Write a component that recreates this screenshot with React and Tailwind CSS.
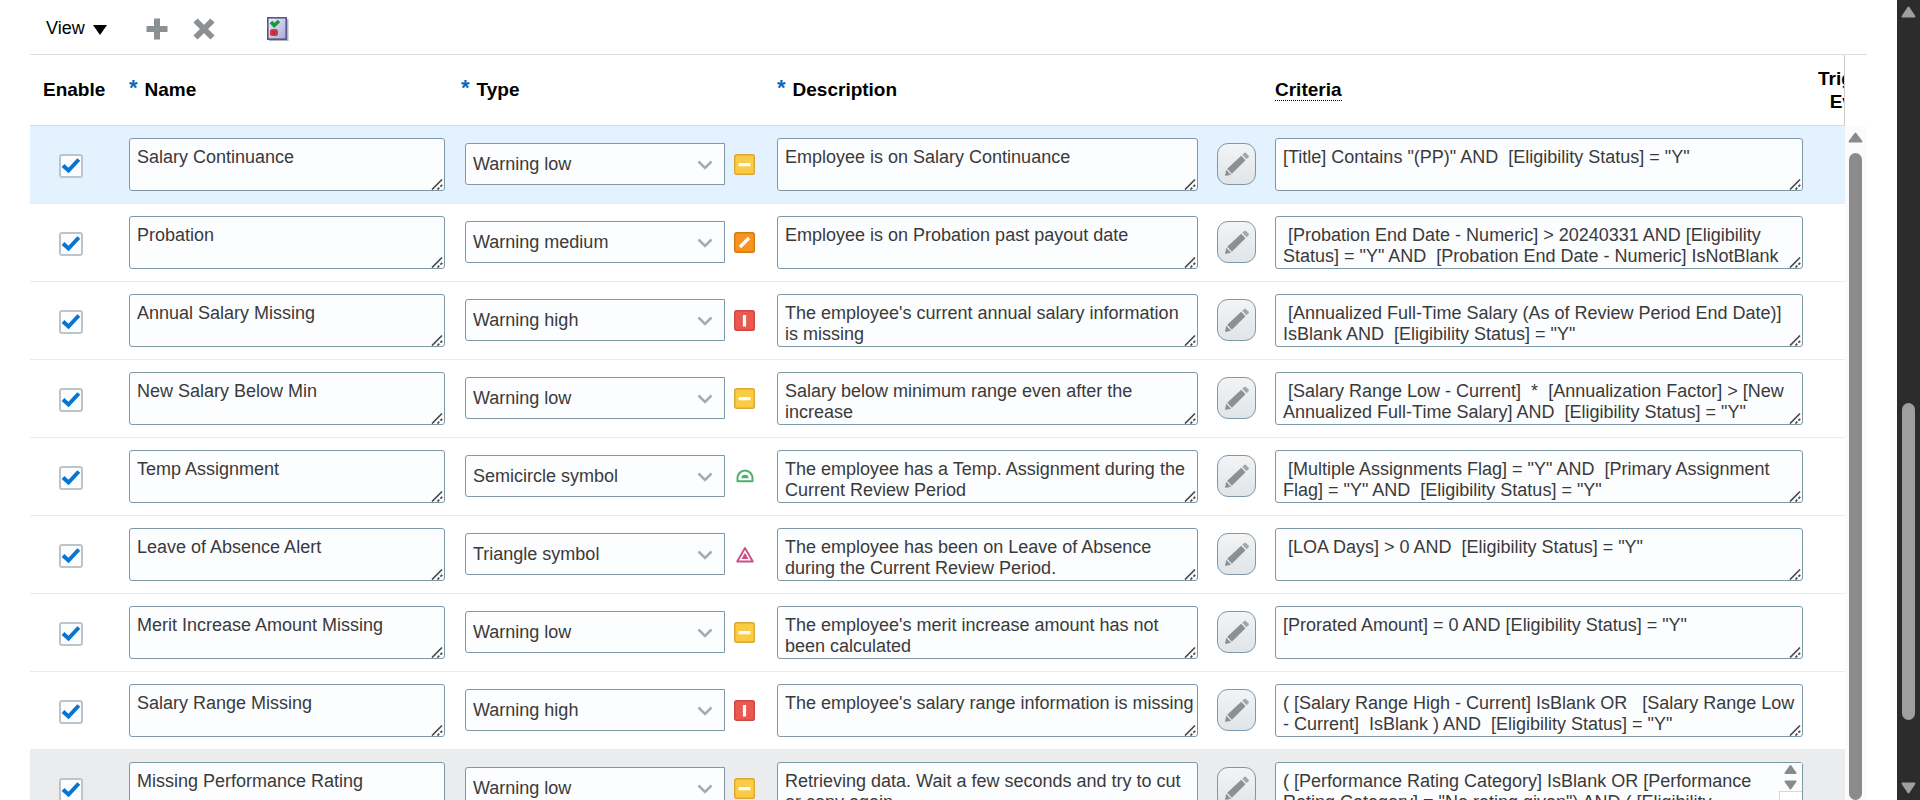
import React from 'react';

const rows = [
  { name: 'Salary Continuance', type: 'Warning low', desc: 'Employee is on Salary Continuance', criteria: '[Title] Contains "(PP)" AND  [Eligibility Status] = "Y"', state: 'selected' },
  { name: 'Probation', type: 'Warning medium', desc: 'Employee is on Probation past payout date', criteria: ' [Probation End Date - Numeric] > 20240331 AND [Eligibility Status] = "Y" AND  [Probation End Date - Numeric] IsNotBlank' },
  { name: 'Annual Salary Missing', type: 'Warning high', desc: "The employee's current annual salary information is missing", criteria: ' [Annualized Full-Time Salary (As of Review Period End Date)] IsBlank AND  [Eligibility Status] = "Y"' },
  { name: 'New Salary Below Min', type: 'Warning low', desc: 'Salary below minimum range even after the increase', criteria: ' [Salary Range Low - Current]  *  [Annualization Factor] > [New Annualized Full-Time Salary] AND  [Eligibility Status] = "Y"' },
  { name: 'Temp Assignment', type: 'Semicircle symbol', desc: 'The employee has a Temp. Assignment during the Current Review Period', criteria: ' [Multiple Assignments Flag] = "Y" AND  [Primary Assignment Flag] = "Y" AND  [Eligibility Status] = "Y"' },
  { name: 'Leave of Absence Alert', type: 'Triangle symbol', desc: 'The employee has been on Leave of Absence during the Current Review Period.', criteria: ' [LOA Days] > 0 AND  [Eligibility Status] = "Y"' },
  { name: 'Merit Increase Amount Missing', type: 'Warning low', desc: "The employee's merit increase amount has not been calculated", criteria: '[Prorated Amount] = 0 AND [Eligibility Status] = "Y"' },
  { name: 'Salary Range Missing', type: 'Warning high', desc: "The employee's salary range information is missing", criteria: '( [Salary Range High - Current] IsBlank OR   [Salary Range Low - Current]  IsBlank ) AND  [Eligibility Status] = "Y"' },
  { name: 'Missing Performance Rating', type: 'Warning low', desc: 'Retrieving data. Wait a few seconds and try to cut or copy again.', criteria: '( [Performance Rating Category] IsBlank OR [Performance Rating Category] = "No rating given") AND ( [Eligibility Status] = "Y")', state: 'hover', scroll: true },
];

const types = ['Warning low', 'Warning medium', 'Warning high', 'Semicircle symbol', 'Triangle symbol'];

function TypeIcon({ type }) {
  if (type === 'Semicircle symbol') {
    return (
      <svg viewBox="0 0 21 21" className="size-[21px] shrink-0" aria-hidden="true">
        <path d="M3.500 15.200v-3a7.500 7.800 0 0 1 15 0v3z" fill="#fff" stroke="#4fae6b" strokeWidth="2" strokeLinejoin="round" />
        <path d="M7.400 12.300a3.600 3.600 0 0 1 7.200 0z" fill="#4fae6b" />
      </svg>
    );
  }
  if (type === 'Triangle symbol') {
    return (
      <svg viewBox="0 0 21 21" className="size-[21px] shrink-0" aria-hidden="true">
        <path d="M11 4L18.800 17.500H3.200z" fill="#fff" stroke="#cc4f87" strokeWidth="1.900" strokeLinejoin="round" />
        <path d="M11 8.800l3.500 6.200H7.500z" fill="#cc4f87" />
      </svg>
    );
  }
  const look = {
    'Warning low': { fill: '#fbcb43', edge: '#d9a935', mark: <path d="M4.500 10.700h12" /> },
    'Warning medium': { fill: '#f8931d', edge: '#d27b14', mark: <path d="M6 15l9-9" /> },
    'Warning high': { fill: '#ec5850', edge: '#c94a44', mark: <path d="M10.500 5v11.500" /> },
  }[type];
  return (
    <svg viewBox="0 0 21 21" className="size-[21px] shrink-0" aria-hidden="true">
      <rect x="0.7" y="0.7" width="19.6" height="19.6" rx="1.8" fill={look.fill} stroke={look.edge} strokeWidth="1.4" />
      <g stroke="#fff" strokeWidth="3.2" strokeLinecap="butt">{look.mark}</g>
    </svg>
  );
}

function Grip() {
  return (
    <svg viewBox="0 0 12 12" className="pointer-events-none absolute right-[2px] bottom-[1px] size-3" aria-hidden="true">
      <path d="M1 11.500L11 1.500M6.500 11.500l1.800-1.800M9.400 8.600l1.800-1.800" stroke="#4a4a4a" strokeWidth="1.700" />
    </svg>
  );
}

function InnerScroll() {
  return (
    <div className="pointer-events-none absolute top-px right-px bottom-px flex w-[23px] flex-col bg-[#fbfcfe]" aria-hidden="true">
      <svg viewBox="0 0 23 28" className="h-7 w-full">
        <path d="M11.5 3L16.500 10H6.500z M11.500 25.500L6.500 18.500H16.500z" fill="#8a8a8a" stroke="#8a8a8a" strokeWidth="2" strokeLinejoin="round" />
      </svg>
      <div className="flex-1 border-t border-l border-[#d5d8da] bg-white" />
    </div>
  );
}

function Area({ label, value, scroll }) {
  return (
    <div className="relative flex">
      <textarea
        aria-label={label}
        defaultValue={value}
        className={'block h-[53px] w-full resize-none overflow-hidden rounded-[3px] border border-[#7f98a6] bg-[#fcfdff] pt-2 pl-[7px] text-[18px] leading-[21px] text-[#3a3a3a] outline-none ' + (scroll ? 'pr-9' : 'pr-px')}
      />
      {scroll ? <InnerScroll /> : <Grip />}
    </div>
  );
}

function Row({ row }) {
  const tone = row.state === 'selected' ? 'bg-[#e4f1ff]' : row.state === 'hover' ? 'bg-[#ebeced]' : 'bg-white';
  return (
    <tr className={'h-[78px] border-b border-[#e9ebed] ' + tone}>
      <td className="p-0">
        <label className="relative mt-1 ml-[29px] block size-6">
          <input type="checkbox" defaultChecked aria-label={'Enable ' + row.name} className="peer block size-6 appearance-none rounded-[3px] border-2 border-[#bcc5cb] bg-[#fcfdff]" />
          <svg viewBox="0 0 24 24" className="pointer-events-none absolute inset-0 hidden size-6 peer-checked:block" aria-hidden="true">
            <path d="M4 11.500l5.500 5L19.800 5.500" fill="none" stroke="#0a74d1" strokeWidth="4" />
          </svg>
        </label>
      </td>
      <td className="py-0 pr-2 pl-2"><Area label="Name" value={row.name} /></td>
      <td className="py-0 pr-2 pl-3">
        <div className="flex items-center gap-[9px]">
          <div className="relative w-[260px]">
            <select aria-label="Type" defaultValue={row.type} className="block h-[42px] w-full appearance-none rounded-l-[3px] border border-[#7f98a6] bg-[#fcfdff] pr-9 pl-[7px] text-[18px] leading-[21px] text-[#3a3a3a]">
              {types.map((t) => <option key={t}>{t}</option>)}
            </select>
            <svg viewBox="0 0 16 10" className="pointer-events-none absolute top-[17px] right-3 h-[10px] w-4" aria-hidden="true">
              <path d="M1.500 1.500L8 8l6.500-6.500" fill="none" stroke="#a9abad" strokeWidth="2.600" />
            </svg>
          </div>
          <TypeIcon type={row.type} />
        </div>
      </td>
      <td className="px-2 py-0"><Area label="Description" value={row.desc} /></td>
      <td className="p-0">
        <button type="button" aria-label="Edit criteria" className="mx-auto flex h-[42px] w-[39px] items-center justify-center rounded-[11px] border border-[#7d97ab] bg-linear-to-b from-[#f2f4f5] to-[#e1e5e8]">
          <svg viewBox="0 0 24 24" className="size-6" aria-hidden="true">
            <path d="M0 24l1.200-6.200 4.800 4.900z" fill="#8b9093" />
            <path d="M2.200 16.700L16.200 3.700l4.300 4.500L6.900 21.700z" fill="#8b9093" />
            <path d="M17.300 2.700L19.200.9q.8-.8 1.700 0l2.600 2.700q.8.900 0 1.700l-2 1.900z" fill="#a2a7aa" />
          </svg>
        </button>
      </td>
      <td className="py-0 pr-[5px] pl-2"><Area label="Criteria" value={row.criteria} scroll={row.scroll} /></td>
      <td className="p-0" />
    </tr>
  );
}

const Star = () => <span className="mr-[7px] inline-block align-top text-[22px] leading-[19px] text-[#0d68b5]" aria-hidden="true">*</span>;

export default function App() {
  return (
    <div className="flex h-screen overflow-hidden bg-white font-['Liberation_Sans',Arial,sans-serif] text-black">
      <main className="mr-[30px] ml-[30px] flex min-w-0 flex-1 flex-col">
        <div className="flex h-[55px] shrink-0 items-center border-b border-[#d6dfe6] pt-[2px] pl-4">
          <button type="button" className="flex items-center gap-2 text-[18px] leading-[21px]">
            View
            <svg viewBox="0 0 14 10" className="mt-[3px] h-[10px] w-[14px]" aria-hidden="true"><path d="M0 0h14L7 10z" /></svg>
          </button>
          <button type="button" aria-label="Add" className="ml-[39px]">
            <svg viewBox="0 0 22 22" className="mt-[2px] size-[22px]" aria-hidden="true"><path d="M8 0.500h6v7.500h7.500v6H14v7.500H8V14H0.500V8H8z" fill="#8b9093" /></svg>
          </button>
          <button type="button" aria-label="Delete" className="ml-[25px]">
            <svg viewBox="0 0 22 22" className="mt-[2px] size-[22px]" aria-hidden="true"><path d="M2.500 2.500l17 17M19.500 2.500l-17 17" stroke="#8b9093" strokeWidth="6" /></svg>
          </button>
          <button type="button" aria-label="Validate" className="ml-[52px]">
            <svg viewBox="0 0 22 24" className="mt-[2px] h-6 w-[22px]" aria-hidden="true">
              <defs><linearGradient id="sheet" x1="0" y1="0" x2="1" y2="1"><stop offset="0" stopColor="#eeeefa" /><stop offset="1" stopColor="#a9a8d8" /></linearGradient></defs>
              <path d="M2 2h19.500v22H2z" fill="#b5b5b8" />
              <rect x="0.800" y="0.800" width="18.400" height="21.400" fill="url(#sheet)" stroke="#57558c" strokeWidth="1.600" />
              <path d="M4 5l3.200 3.500L12 4" fill="none" stroke="#1a9a3c" strokeWidth="3.600" />
              <path d="M4.500 12h5l1.500 1.500v4L9.500 19h-5L3 17.500v-4z" fill="#cf3d4a" />
              <path d="M5 13.500l4 4M9 13.500l-4 4" stroke="#9c2633" strokeWidth="1" />
            </svg>
          </button>
        </div>

        <div className="flex min-h-0 flex-1">
          <div className="min-w-0 flex-1 overflow-hidden">
            <table className="w-full table-fixed border-collapse text-left">
              <colgroup>
                <col className="w-[91px]" />
                <col className="w-[332px]" />
                <col className="w-[316px]" />
                <col className="w-[437px]" />
                <col className="w-[61px]" />
                <col />
                <col className="w-[37px]" />
              </colgroup>
              <thead>
                <tr className="h-[70px] border-b border-[#d6dfe6] text-[19px] leading-[23px]">
                  <th className="py-0 pr-0 pl-[13px]">Enable</th>
                  <th className="py-0 pl-2"><Star />Name</th>
                  <th className="py-0 pl-2"><Star />Type</th>
                  <th className="py-0 pl-2"><Star />Description</th>
                  <th className="p-0" aria-label="Edit" />
                  <th className="py-0 pl-2"><span className="border-b border-dotted border-black">Criteria</span></th>
                  <th className="border-r border-[#c9cdd0] p-0">
                    <div className="overflow-hidden"><div className="ml-2 w-20 text-center">Triggers Event</div></div>
                  </th>
                </tr>
              </thead>
              <tbody>{rows.map((r) => <Row key={r.name} row={r} />)}</tbody>
            </table>
          </div>
          <div className="flex w-[22px] shrink-0 flex-col pt-[71px]" aria-hidden="true">
            <div className="flex flex-1 flex-col items-start bg-[#fbfbfb] pt-[6px] pl-[3px]">
              <svg viewBox="0 0 15 11" className="h-[11px] w-[15px]"><path d="M7.500 1.500L13.500 9.500H1.500z" fill="#8b8b8b" stroke="#8b8b8b" strokeWidth="2" strokeLinejoin="round" /></svg>
              <div className="mt-[10px] ml-px w-[13px] flex-1 rounded-full bg-[#8b8b8b]" />
            </div>
          </div>
        </div>
      </main>
      <div className="flex w-[23px] shrink-0 flex-col items-center justify-between bg-[#2c2c2c] py-[6px]" aria-hidden="true">
        <svg viewBox="0 0 15 12" className="h-3 w-[15px]"><path d="M7.500 1.500L13.500 10.500H1.500z" fill="#9f9f9f" stroke="#9f9f9f" strokeWidth="2" strokeLinejoin="round" /></svg>
        <div className="flex w-full flex-1 flex-col items-center">
          <div className="basis-[385px]" />
          <div className="h-[317px] w-[13px] rounded-full bg-[#9f9f9f]" />
        </div>
        <svg viewBox="0 0 15 12" className="h-3 w-[15px]"><path d="M7.500 10.500L1.500 1.500H13.500z" fill="#9f9f9f" stroke="#9f9f9f" strokeWidth="2" strokeLinejoin="round" /></svg>
      </div>
    </div>
  );
}
